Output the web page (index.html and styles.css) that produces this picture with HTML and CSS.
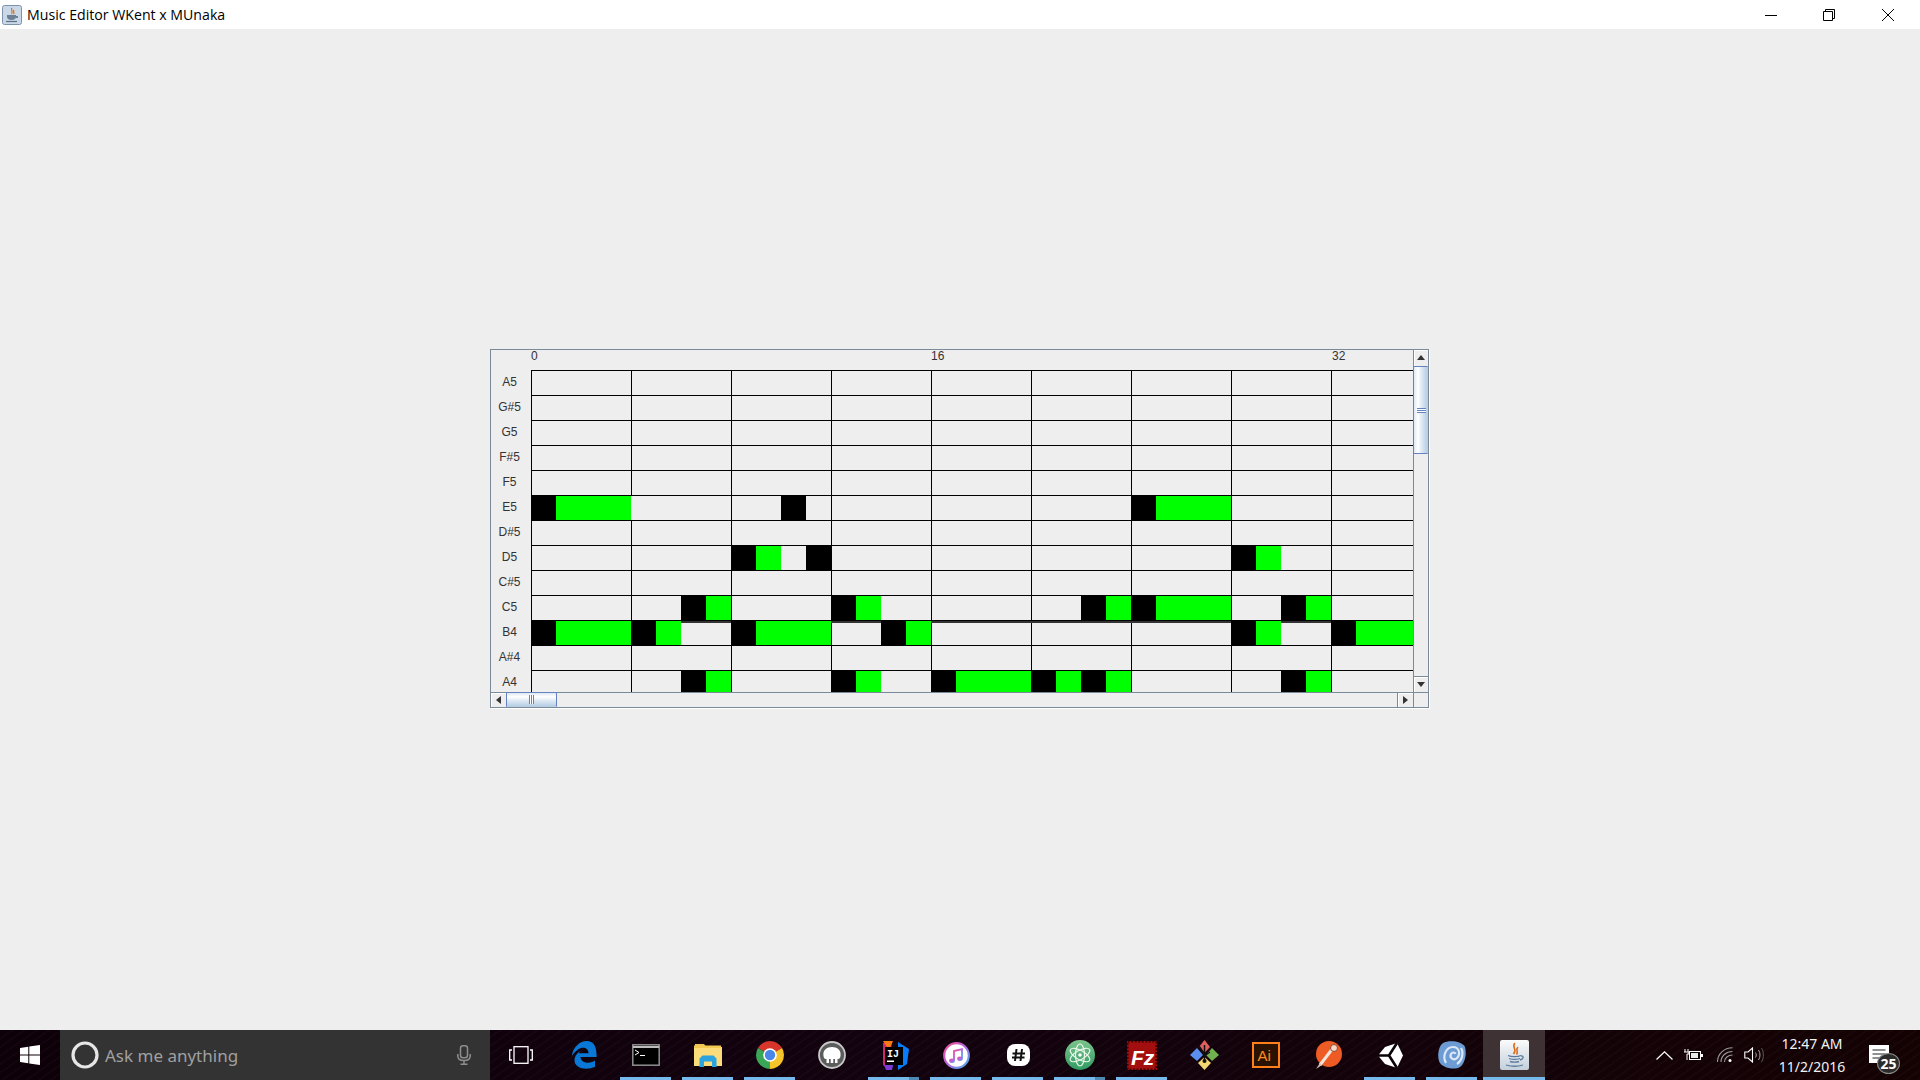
FILE: index.html
```html
<!DOCTYPE html>
<html lang="en">
<head>
<meta charset="utf-8">
<title>Music Editor WKent x MUnaka</title>
<link rel="stylesheet" href="styles.css">
</head>
<body>
<header class="titlebar">
  <svg class="title-icon" width="20" height="20" viewBox="0 0 20 20"><rect x=".5" y=".5" width="19" height="19" rx="2" fill="#c9d7e6" stroke="#7d93ad"/><path d="M10 3C8 5 12 6 9.500 9M12 5C10.500 6.500 13 7.500 11.500 9" fill="none" stroke="#d9701c" stroke-width="1.200"/><path d="M5 10H14V12C14 14 12 15 9.500 15C7 15 5 14 5 12ZM14 11H16V13H14" fill="#6c7f93"/><path d="M4 16.500H15" stroke="#5a7088" stroke-width="1.200"/></svg>
  <span class="title-text">Music Editor WKent x MUnaka</span>
  <div class="win-controls">
    <svg width="12" height="14" viewBox="0 0 12 14"><path d="M0 7.500H12" stroke="#000"/></svg>
    <svg width="12" height="12" viewBox="0 0 12 12"><path d="M.5 2.500H9.500V11.500H.5ZM2.500 2.500V.5H11.500V9.500H9.500" fill="none" stroke="#000"/></svg>
    <svg class="win-close" width="12" height="12" viewBox="0 0 12 12"><path d="M0 0L12 12M12 0L0 12" fill="none" stroke="#000"/></svg>
  </div>
</header>

<main class="desk">
  <section class="scrollpane">
    <div class="viewport">
      <div class="ruler">
        <span class="bar-num">0</span>
        <span class="bar-num">16</span>
        <span class="bar-num">32</span>
      </div>
      <div class="pitches">
        <div class="pitch">A5</div>
        <div class="pitch">G#5</div>
        <div class="pitch">G5</div>
        <div class="pitch">F#5</div>
        <div class="pitch">F5</div>
        <div class="pitch">E5</div>
        <div class="pitch">D#5</div>
        <div class="pitch">D5</div>
        <div class="pitch">C#5</div>
        <div class="pitch">C5</div>
        <div class="pitch">B4</div>
        <div class="pitch">A#4</div>
        <div class="pitch">A4</div>
      </div>
      <svg class="roll" width="882" height="322" viewBox="0 0 882 322" shape-rendering="crispEdges">
        <g class="onset">
          <rect x="0" y="126" width="25" height="24"/><rect x="250" y="126" width="25" height="24"/><rect x="600" y="126" width="25" height="24"/>
          <rect x="200" y="176" width="25" height="24"/><rect x="275" y="176" width="26" height="24"/><rect x="700" y="176" width="25" height="24"/>
          <rect x="150" y="226" width="25" height="24"/><rect x="300" y="226" width="25" height="24"/><rect x="550" y="226" width="25" height="24"/><rect x="600" y="226" width="25" height="24"/><rect x="750" y="226" width="25" height="24"/>
          <rect x="0" y="251" width="25" height="24"/><rect x="100" y="251" width="25" height="24"/><rect x="200" y="251" width="25" height="24"/><rect x="350" y="251" width="25" height="24"/><rect x="700" y="251" width="25" height="24"/><rect x="800" y="251" width="25" height="24"/>
          <rect x="150" y="301" width="25" height="21"/><rect x="300" y="301" width="25" height="21"/><rect x="400" y="301" width="25" height="21"/><rect x="500" y="301" width="25" height="21"/><rect x="550" y="301" width="25" height="21"/><rect x="750" y="301" width="25" height="21"/>
        </g>
        <g class="sustain">
          <rect x="25" y="126" width="75" height="24"/><rect x="625" y="126" width="75" height="24"/>
          <rect x="225" y="176" width="25" height="24"/><rect x="725" y="176" width="25" height="24"/>
          <rect x="175" y="226" width="25" height="24"/><rect x="325" y="226" width="25" height="24"/><rect x="575" y="226" width="25" height="24"/><rect x="625" y="226" width="75" height="24"/><rect x="775" y="226" width="25" height="24"/>
          <rect x="25" y="251" width="75" height="24"/><rect x="125" y="251" width="25" height="24"/><rect x="225" y="251" width="75" height="24"/><rect x="375" y="251" width="25" height="24"/><rect x="725" y="251" width="25" height="24"/><rect x="825" y="251" width="57" height="24"/>
          <rect x="175" y="301" width="25" height="21"/><rect x="325" y="301" width="25" height="21"/><rect x="425" y="301" width="75" height="21"/><rect x="525" y="301" width="25" height="21"/><rect x="575" y="301" width="25" height="21"/><rect x="775" y="301" width="25" height="21"/>
        </g>
        <g class="gridline">
          <path d="M0 .5H882M0 25.500H882M0 50.500H882M0 75.500H882M0 100.500H882M0 125.500H882M0 150.500H882M0 175.500H882M0 200.500H882M0 225.500H882M0 250.500H882M0 275.500H882M0 300.500H882"/>
          <path d="M.5 0V322M100.500 0V125M100.500 150V322M200.500 0V322M300.500 0V322M400.500 0V322M500.500 0V322M600.500 0V322M700.500 0V322M800.500 0V322"/>
        </g>
        <g class="tie">
          <rect x="150" y="251" width="50" height="2"/><rect x="300" y="251" width="50" height="2"/><rect x="400" y="251" width="300" height="2"/><rect x="750" y="251" width="50" height="2"/>
        </g>
      </svg>
    </div>
    <div class="vbar">
      <div class="sb-btn sb-btn-v sb-top-v"><i class="tri tri-up"></i></div>
      <div class="thumb-v"><i class="grip-v"></i></div>
      <div class="track"></div>
      <div class="sb-btn sb-btn-v sb-end-v"><i class="tri tri-down"></i></div>
    </div>
    <div class="hbar">
      <div class="sb-btn sb-btn-h"><i class="tri tri-left"></i></div>
      <div class="thumb-h"><i class="grip-h"></i></div>
      <div class="track"></div>
      <div class="sb-btn sb-btn-h sb-end-h"><i class="tri tri-right"></i></div>
    </div>
    <div class="corner"></div>
  </section>
</main>

<footer class="taskbar">
  <div class="start">
    <svg width="20" height="20" viewBox="0 0 20 20" fill="#fff"><path d="M0 2.900L8.300 1.700V9.500H0ZM9.300 1.500L20 0V9.500H9.300ZM0 10.500H8.300V18.300L0 17.100ZM9.300 10.500H20V20L9.300 18.500Z"/></svg>
  </div>
  <div class="search">
    <svg width="28" height="28" viewBox="0 0 28 28"><circle cx="14" cy="14" r="12" fill="none" stroke="#e6e6e6" stroke-width="3.200"/></svg>
    <span class="search-text">Ask me anything</span>
    <svg class="mic" width="14" height="20" viewBox="0 0 14 20" fill="none" stroke="#8e8e8e" stroke-width="1.500"><rect x="3.500" y=".8" width="7" height="12" rx="2.500"/><path d="M.8 9V11C.8 14 3.500 15.500 7 15.500C10.500 15.500 13.200 14 13.200 11V9M7 15.500V19M3.500 19.200H10.500"/></svg>
  </div>
  <div class="apps">
    <div class="app"><svg class="taskview" width="24" height="18" viewBox="0 0 24 18" fill="none" stroke="#fff" stroke-width="1.300"><rect x="5" y=".7" width="14" height="16.600"/><path d="M3 4H.7V14H3M21 4H23.300V14H21"/></svg></div>
    <div class="app"><svg width="26" height="28" viewBox="0 0 26 28"><path fill="#0a78d7" d="M.8 15C2 6 9 0 16 0C22.500 0 26 5.500 25.500 16H9.500C10 22 18 23.500 24 19.500V25.800C15 30 3.500 27 3.500 19.500C3.500 15.500 6 12 10 9.500C8.800 10.500 8 11.500 7.700 12.200H17.500C17.500 7 12 5 7 8.500C4.500 10.500 2.500 12.500.8 15Z"/></svg></div>
    <div class="app on"><svg width="28" height="22" viewBox="0 0 28 22"><rect x=".8" y=".8" width="26.400" height="20.400" fill="#000" stroke="#8f8f8f" stroke-width="1.500"/><path d="M1 3H27" stroke="#bdbdbd" stroke-width="2"/><path d="M3 6L7 8.500L3 11" fill="none" stroke="#fff"/><path d="M8 11.500H13" stroke="#fff"/></svg></div>
    <div class="app on"><svg width="28" height="24" viewBox="0 0 28 24"><path fill="#e9c25a" d="M1 1H10L12 3.500H1Z"/><path fill="#fbdb7a" d="M0 4H28V23H0Z"/><path fill="#f4c94f" d="M0 2.500H27V5H0Z"/><path fill="#2aa3df" d="M5.500 24V15.500L8.500 12.500H19.500L22.500 15.500V24H18V18.500H10V24Z"/></svg></div>
    <div class="app on"><svg width="28" height="28" viewBox="0 0 28 28"><path fill="#d8362a" d="M14 14L1.900 7A14 14 0 0 1 26.100 7Z"/><path fill="#f6c32a" d="M14 14L26.100 7A14 14 0 0 1 14 28Z"/><path fill="#3aa757" d="M14 14L14 28A14 14 0 0 1 1.900 7Z"/><circle cx="14" cy="14" r="6.800" fill="#fff"/><circle cx="14" cy="14" r="5.200" fill="#4a86e8"/></svg></div>
    <div class="app"><svg width="28" height="28" viewBox="0 0 28 28"><circle cx="14" cy="14" r="13" fill="#5c5c5c" stroke="#c9c9c9" stroke-width="1.800"/><path fill="#fff" d="M5.500 15C4.500 9 9 6 14 6C19 6 23.500 9 22.500 15C22.200 17.500 20.800 18.500 19.500 17.800V22H17V18H15.300V22H12.700V18H11V22H8.500V17.800C7.200 18.500 5.800 17.500 5.500 15Z"/></svg></div>
    <div class="app on split"><svg width="29" height="29" viewBox="0 0 29 29"><path fill="#d3246f" d="M3 2L12 0L9 29L3 24Z"/><path fill="#f97a12" d="M3 0H13L9 9Z"/><path fill="#7b3cd6" d="M4 24L14 20L12 29H6Z"/><path fill="#087cfa" d="M18 1L29 8L27 23L18 29Z"/><rect x="5" y="6" width="18" height="18" fill="#000"/><text class="ij-text" x="7" y="16">IJ</text><rect x="7" y="19.500" width="7" height="1.500" fill="#fff"/></svg></div>
    <div class="app on"><svg width="27" height="27" viewBox="0 0 27 27"><defs><linearGradient id="itg" x1="0" y1="0" x2="1" y2="1"><stop offset="0" stop-color="#f24d8f"/><stop offset=".5" stop-color="#b565e0"/><stop offset="1" stop-color="#3cb5ef"/></linearGradient></defs><circle cx="13.500" cy="13.500" r="12.300" fill="#fff" stroke="url(#itg)" stroke-width="2.200"/><path d="M11 18.500V9L19 7.200V16.500" fill="none" stroke="url(#itg)" stroke-width="1.800"/><ellipse cx="9" cy="18.800" rx="2.800" ry="2.200" fill="url(#itg)"/><ellipse cx="17" cy="16.800" rx="2.800" ry="2.200" fill="url(#itg)"/></svg></div>
    <div class="app on"><svg width="23" height="22" viewBox="0 0 23 22"><rect width="23" height="22" rx="8" fill="#fff"/><path d="M9.500 5L8 17M15 5L13.500 17M5.500 9.500H18M5 13.500H17.500" stroke="#111" stroke-width="2"/></svg></div>
    <div class="app on split"><svg width="30" height="30" viewBox="0 0 30 30"><defs><linearGradient id="atg" x1="0" y1="0" x2="0" y2="1"><stop offset="0" stop-color="#7cc48c"/><stop offset="1" stop-color="#2f9c63"/></linearGradient></defs><circle cx="15" cy="15" r="15" fill="url(#atg)"/><g fill="none" stroke="#e8f5ea" stroke-width="1.200"><ellipse cx="15" cy="15" rx="4.500" ry="11"/><ellipse cx="15" cy="15" rx="4.500" ry="11" transform="rotate(60 15 15)"/><ellipse cx="15" cy="15" rx="4.500" ry="11" transform="rotate(-60 15 15)"/></g><circle cx="15" cy="15" r="1.800" fill="#fff"/></svg></div>
    <div class="app on"><svg width="30" height="29" viewBox="0 0 30 29"><rect width="30" height="29" fill="#a30f0f"/><rect x=".8" y=".8" width="28.400" height="27.400" fill="none" stroke="#4a0000" stroke-width="1.600" stroke-dasharray="2 1.500"/><text class="fz-text" x="4" y="24">Fz</text></svg></div>
    <div class="app"><svg width="31" height="30" viewBox="0 0 31 30"><path fill="#e25f5f" d="M15.500 0L21 7L15.500 13L10 7Z"/><path fill="#5b8fef" d="M8 8L14 15L8 21L1 15Z"/><path fill="#71b24f" d="M23 8L30 15L23 21L17 15Z"/><path fill="#f3d774" d="M15.500 17L22 23L15.500 30L9 23Z"/><path d="M15.500 5V20M10 6L15.500 14M21 12L15.500 16" stroke="#111" stroke-width="1.500" fill="none"/><circle cx="15.500" cy="21" r="2" fill="#111"/></svg></div>
    <div class="app"><svg width="28" height="26" viewBox="0 0 28 26"><rect x="1" y="1" width="26" height="24" fill="#2a1200" stroke="#ff7f18" stroke-width="2"/><text class="ai-text" x="5.500" y="19">Ai</text></svg></div>
    <div class="app"><svg width="27" height="28" viewBox="0 0 27 28"><ellipse cx="14" cy="13" rx="13" ry="13" fill="#ee5b24"/><path d="M5 24L18 7" stroke="#f7e4d8" stroke-width="3"/><circle cx="19" cy="7" r="3.500" fill="#f4d8c8" stroke="#8a4a30"/><path d="M1 28L5 22L7 24Z" fill="#d9c3b5"/></svg></div>
    <div class="app on"><svg width="25" height="27" viewBox="0 0 25 27"><path fill="#fff" d="M0 13.500L7 5L19 1L25 13.500L19 26L7 22Z"/><path d="M0 13.500H11L19 1M11 13.500L19 26" fill="none" stroke="#0a0308" stroke-width="2.600"/></svg></div>
    <div class="app on"><svg width="28" height="28" viewBox="0 0 28 28"><path fill="#6d9bd3" d="M5 2C11 -1 24 0 27 6C29 13 27 24 20 27C13 29 3 26 1 20C-1 13 1 5 5 2Z"/><path d="M8 22C4 15 8 6 15 6C21 6 23 13 19 17C16 20 11 17 13 13C14 11 17 11 17.500 13M19 23C24 20 26 12 23 7" fill="none" stroke="#dbe8f6" stroke-width="2.200"/></svg></div>
    <div class="app on active"><svg width="29" height="30" viewBox="0 0 29 30"><defs><linearGradient id="jvg" x1="0" y1="0" x2="0" y2="1"><stop offset="0" stop-color="#fbfbfb"/><stop offset="1" stop-color="#c3cfdb"/></linearGradient></defs><rect width="29" height="30" rx="2" fill="url(#jvg)"/><path d="M15 3C11 7 18 9 13.500 14M18 7C15 10 19 11 16.500 14.500" fill="none" stroke="#dc6d1b" stroke-width="1.600"/><path d="M8 15.500C11 17 18 17 21 15.500M9 18.500C12 19.500 17 19.500 20 18.500M10 21.500C13 22.300 16 22.300 19 21.500M6 25C11 26.500 18 26.500 23 25M21 16C24 15.500 24 19 20 20" fill="none" stroke="#5a7a9c" stroke-width="1.300"/></svg></div>
  </div>
  <div class="tray">
    <svg class="t-chev" width="17" height="9" viewBox="0 0 17 9"><path d="M.5 8.500L8.500 .8L16.500 8.500" fill="none" stroke="#fff" stroke-width="1.200"/></svg>
    <svg class="t-batt" width="19" height="12" viewBox="0 0 19 12"><path d="M1 0V3M4 0V3M0 3H5V5H3V11" fill="none" stroke="#fff"/><rect x="5.500" y="2.500" width="11" height="8" fill="#0c0202" stroke="#fff"/><rect x="7" y="4" width="7" height="5" fill="#e8e8e8"/><rect x="17" y="5" width="2" height="3" fill="#fff"/></svg>
    <svg class="t-wifi" width="16" height="16" viewBox="0 0 16 16" fill="none" stroke="#9b9b9b" stroke-width="1.100"><path d="M.5 15C.5 7 7 .8 15.500 .8M4 15C4 9 9 4.500 15.500 4.500M7.500 15C7.500 11 11 8 15.500 8"/><circle cx="13" cy="13.500" r="1.500" fill="#fff" stroke="none"/></svg>
    <svg class="t-vol" width="20" height="16" viewBox="0 0 20 16" fill="none"><path d="M.8 5H4L8.500 1V15L4 11H.8Z" stroke="#fff" stroke-width="1.100"/><path d="M11.500 5.500C12.500 7 12.500 9 11.500 10.500M14.500 3C16.500 6 16.500 10 14.500 13" stroke="#aaa"/><path d="M17.500 1C20 5 20 11 17.500 15" stroke="#5a5a5a"/></svg>
    <div class="clock"><span>12:47 AM</span><span>11/2/2016</span></div>
    <div class="action">
      <svg width="20" height="18" viewBox="0 0 20 18"><rect width="20" height="18" fill="#fff"/><path d="M3.500 5H16.500M3.500 9H16.500M3.500 13H11" stroke="#222" stroke-width="1.200"/></svg>
      <span class="badge">25</span>
    </div>
  </div>
</footer>
</body>
</html>
```
FILE: styles.css
```css
* { box-sizing: border-box; }
html, body { margin: 0; height: 100%; }
body {
  display: flex;
  flex-direction: column;
  height: 100vh;
  overflow: hidden;
  background: #eeeeee;
  font-family: "Liberation Sans", Arial, sans-serif;
}
svg { display: block; flex: none; }

/* title bar */
.titlebar {
  height: 29px;
  flex: none;
  background: #fff;
  display: flex;
  align-items: center;
  padding-left: 2px;
}
.title-text {
  margin-left: 5px;
  font: 14.150px "Open Sans", sans-serif;
  color: #000;
  white-space: nowrap;
}
.win-controls {
  margin-left: auto;
  display: flex;
  align-items: center;
  gap: 46px;
  padding-right: 26px;
}
.win-close { margin-left: 1px; }

/* content */
.desk {
  flex: 1;
  padding: 320px 0 0 490px;
}
.scrollpane {
  width: 939px;
  height: 359px;
  border: 1px solid #7a8a99;
  box-shadow: 1px 1px 0 #fff;
  display: grid;
  grid-template-columns: 922px 15px;
  grid-template-rows: 342px 15px;
}
.viewport {
  overflow: hidden;
  display: grid;
  grid-template-columns: 40px 882px;
  grid-template-rows: 20px 322px;
}
.ruler {
  grid-column: 2;
  display: flex;
  font-size: 12px;
  line-height: 12px;
  color: #333;
}
.bar-num { width: 400px; flex: none; }
.bar-num:last-child { width: 82px; padding-left: 1px; }
.pitches { overflow: hidden; }
.pitch {
  height: 25px;
  line-height: 25px;
  text-align: center;
  font-size: 12px;
  color: #333;
  padding-right: 3px;
}
.onset rect { fill: #000; }
.sustain rect { fill: #00ff00; }
.gridline path { stroke: #000; stroke-width: 1; fill: none; }
.tie rect { fill: #333; }

/* scrollbars */
.vbar {
  border-left: 1px solid #7a8a99;
  display: flex;
  flex-direction: column;
  min-height: 0;
}
.hbar {
  border-top: 1px solid #7a8a99;
  display: flex;
  min-width: 0;
}
.track { flex: 1; background: #eee; }
.corner { border-top: 1px solid #7a8a99; border-left: 1px solid #7a8a99; background: #eee; }
.sb-btn {
  flex: none;
  display: flex;
  align-items: center;
  justify-content: center;
  background: #eee;
  box-shadow: inset 1px 1px 0 #fff;
}
.sb-btn-v { height: 16px; }
.sb-top-v { padding-bottom: 2px; }
.sb-btn-h { width: 15px; }
.sb-end-v { border-top: 1px solid #7a8a99; }
.sb-end-h { width: 16px; border-left: 1px solid #7a8a99; }
.tri { display: block; width: 0; height: 0; border-style: solid; border-color: transparent; }
.tri-up { border-width: 0 4.500px 5px; border-bottom-color: #333; }
.tri-down { border-width: 5px 4.500px 0; border-top-color: #333; }
.tri-left { border-width: 4.500px 5px 4.500px 0; border-right-color: #333; }
.tri-right { border-width: 4.500px 0 4.500px 5px; border-left-color: #333; }
.thumb-v {
  height: 88px;
  flex: none;
  margin-left: -1px;
  border: 1px solid #6382bf;
  border-right-color: #b8cfe5;
  background: linear-gradient(to right, #dde8f3 0%, #fff 30%, #dde8f3 60%, #b8cfe5 100%);
  display: flex;
  align-items: center;
  justify-content: center;
}
.grip-v {
  display: block;
  width: 9px;
  height: 5px;
  margin-top: 1px;
  margin-left: 1px;
  background: repeating-linear-gradient(to bottom, #6382bf 0 1px, #fff 1px 2px);
}
.thumb-h {
  width: 51px;
  flex: none;
  margin-top: -1px;
  border: 1px solid #6382bf;
  border-bottom-color: #b8cfe5;
  background: linear-gradient(to bottom, #dde8f3 0%, #fff 30%, #dde8f3 60%, #b8cfe5 100%);
  display: flex;
  align-items: center;
  justify-content: center;
}
.grip-h {
  display: block;
  width: 5px;
  height: 9px;
  background: repeating-linear-gradient(to right, #6382bf 0 1px, #fff 1px 2px);
}

/* taskbar */
.taskbar {
  height: 50px;
  flex: none;
  display: flex;
  background:
    repeating-linear-gradient(-35deg, rgba(255,255,255,.018) 0 2px, transparent 2px 7px),
    linear-gradient(to right, #0d0008, #12020f 45%, #140203);
  color: #fff;
}
.start {
  width: 60px;
  flex: none;
  display: flex;
  align-items: center;
  padding-left: 20px;
}
.search {
  width: 430px;
  flex: none;
  background: #333;
  display: flex;
  align-items: center;
  padding-left: 11px;
}
.search-text {
  margin-left: 6px;
  font: 17px "Noto Sans", sans-serif;
  color: #a0a0a0;
}
.mic { margin-left: auto; margin-right: 19px; }
.apps { display: flex; margin-left: 1px; }
.app {
  width: 62px;
  flex: none;
  display: flex;
  align-items: center;
  justify-content: center;
  position: relative;
}
.taskview { margin-right: 3px; }
.app.on::after {
  content: "";
  position: absolute;
  left: 5px;
  right: 6px;
  bottom: 0;
  height: 3px;
  background: #76b9ed;
}
.app.split::after {
  background: linear-gradient(to right, #76b9ed 0 80%, #4f88b3 80% 100%);
}
.app.active { background: #3e3234; }
.app.active::after { left: 0; right: 0; }
.ij-text { font: bold 10px "Liberation Mono", monospace; fill: #fff; }
.fz-text { font: italic bold 21px "Liberation Sans", sans-serif; fill: #fff; }
.ai-text { font: 15px "Liberation Sans", sans-serif; fill: #ff8a1f; }

.tray {
  margin-left: auto;
  display: flex;
  align-items: center;
  padding-right: 20px;
}
.t-batt { margin-left: 11px; }
.t-wifi { margin-left: 14px; }
.t-vol { margin-left: 11px; }
.clock {
  margin-left: 14px;
  width: 68px;
  display: flex;
  flex-direction: column;
  align-items: center;
  font: 14px/23px "Noto Sans", sans-serif;
  color: #f2f2f2;
  white-space: nowrap;
}
.action {
  margin-left: 23px;
  margin-top: 10px;
  width: 31px;
  height: 30px;
  position: relative;
}
.badge {
  position: absolute;
  left: 8px;
  top: 8px;
  width: 23px;
  height: 21px;
  border-radius: 50%;
  background: #2b2b2b;
  border: 1px solid #8a8a8a;
  font: bold 14px/19px "Noto Sans", sans-serif;
  text-align: center;
  color: #fff;
}
```
